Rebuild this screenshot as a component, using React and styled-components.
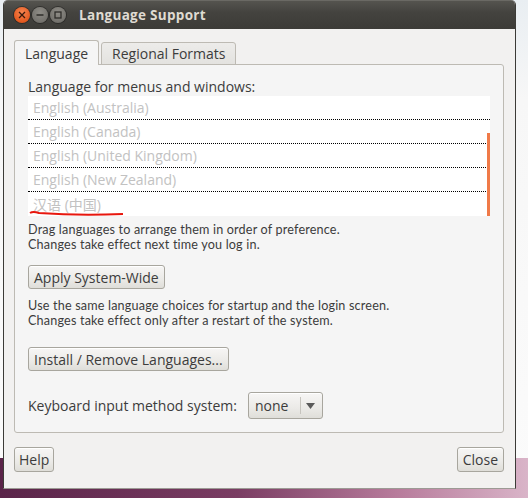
import React from "react";
import styled, { createGlobalStyle } from "styled-components";

const Global = createGlobalStyle`
  html, body {
    margin: 0;
    padding: 0;
  }
  body {
    width: 528px;
    height: 498px;
    overflow: hidden;
    font-family: "Open Sans", "Liberation Sans", sans-serif;
    color: #3c3c3c;
  }
`;

const Desktop = styled.div`
  width: 528px;
  height: 498px;
  display: flex;
  align-items: flex-start;
  background:
    linear-gradient(90deg, #5a2449 0%, #7a3d63 45%, #b77b9b 75%, #d9b4c8 100%) bottom / 100% 40px no-repeat,
    linear-gradient(180deg, #e9eef2 0%, #f7f7f7 20%, #fbfbfb 100%);
`;

const Window = styled.div`
  margin-left: 3px;
  width: 511px;
  height: 488px;
  display: flex;
  flex-direction: column;
  background: #f2f1f0;
  border: 1px solid #3c3b37;
  border-top: none;
  border-bottom-color: #9c9a94;
  border-radius: 5px 5px 0 0;
  overflow: hidden;
`;

const TitleBar = styled.div`
  height: 28px;
  flex: none;
  display: flex;
  align-items: center;
  padding-left: 10px;
  background: linear-gradient(180deg, #55544f 0%, #44433f 40%, #3c3b37 100%);
  border-top: 1px solid #6a6964;
`;

const WinButtons = styled.div`
  display: flex;
  align-items: center;
  gap: 2px;
`;

const WinButton = styled.div`
  width: 16px;
  height: 16px;
  border-radius: 50%;
  display: flex;
  align-items: center;
  justify-content: center;
  background: ${(p) =>
    p.$close
      ? "radial-gradient(circle at 50% 35%, #f68652 0%, #e4591f 70%, #c24613 100%)"
      : "radial-gradient(circle at 50% 35%, #8e8c86 0%, #74726d 70%, #5e5d58 100%)"};
  box-shadow: 0 0 0 1px rgba(30, 30, 28, 0.6);
`;

const Title = styled.div`
  margin-left: 13px;
  font-weight: bold;
  font-size: 13.5px;
  color: #dfdbd2;
  letter-spacing: 0.3px;
`;

const Body = styled.div`
  flex: 1;
  display: flex;
  flex-direction: column;
  padding: 11px 11px 15px 10px;
`;

const Tabs = styled.div`
  display: flex;
  align-items: flex-end;
  gap: 2px;
  height: 25px;
  position: relative;
  z-index: 1;
`;

const Tab = styled.div`
  height: ${(p) => (p.$active ? "25px" : "23px")};
  box-sizing: border-box;
  padding: 0 10px 0 10px;
  display: flex;
  align-items: center;
  font-size: 14px;
  color: #3c3c3c;
  border: 1px solid #bdbab3;
  border-bottom: ${(p) => (p.$active ? "none" : "1px solid #bdbab3")};
  border-radius: 3px 3px 0 0;
  background: ${(p) =>
    p.$active ? "#f5f5f5" : "linear-gradient(180deg, #edecea 0%, #e3e2df 100%)"};
`;

const Panel = styled.div`
  height: 369px;
  box-sizing: border-box;
  margin-top: -1px;
  border: 1px solid #bdbab3;
  border-radius: 0 3px 3px 3px;
  background: #f5f5f5;
  padding: 13px 13px 0 13px;
  display: flex;
  flex-direction: column;
  align-items: flex-start;
`;

const Label = styled.div`
  font-size: 14px;
  line-height: 17px;
`;

const List = styled.div`
  position: relative;
  margin-top: 1px;
  width: 462px;
  background: #fff;
`;

const Row = styled.div`
  height: 24px;
  box-sizing: border-box;
  padding-left: 5px;
  padding-bottom: 1px;
  display: flex;
  align-items: center;
  font-size: 14px;
  color: #c2c2c2;
  font-family: "Open Sans", "Liberation Sans", "Noto Sans CJK SC", sans-serif;
  border-bottom: ${(p) => (p.$last ? "none" : "1px dotted #000")};
`;

const Scroll = styled.div`
  position: absolute;
  right: 0;
  top: 37px;
  bottom: 0;
  width: 3px;
  background: #f07a48;
`;

const Mark = styled.svg`
  position: absolute;
  left: 1px;
  top: 114px;
  overflow: visible;
`;

const Note = styled.div`
  margin-top: ${(p) => p.$mt || 0}px;
  font-family: Lato, "Open Sans", sans-serif;
  font-size: 12.6px;
  line-height: 15px;
  letter-spacing: 0.18px;
`;

const NoteLine = styled.div`
  height: 15px;
  white-space: nowrap;
`;

const Button = styled.div`
  box-sizing: border-box;
  height: ${(p) => p.$h || 24}px;
  margin-top: ${(p) => p.$mt || 0}px;
  padding: 0 ${(p) => p.$px || 5}px;
  display: inline-flex;
  align-items: center;
  font-size: 14px;
  color: #3c3c3c;
  border: 1px solid #a8a69e;
  border-radius: 3px;
  background: linear-gradient(180deg, #f7f6f5 0%, #ebeae7 60%, #dfded9 100%);
  box-shadow: inset 0 1px 0 #fff;
`;

const KeyRow = styled.div`
  margin-top: 21px;
  display: flex;
  align-items: center;
  gap: 11px;
  font-size: 14px;
`;

const Combo = styled(Button)`
  width: 75px;
  padding: 0 0 0 6px;
  justify-content: space-between;
`;

const ComboArrow = styled.div`
  width: 20px;
  height: 17px;
  border-left: 1px solid #c6c4be;
  display: flex;
  align-items: center;
  justify-content: center;
  margin-right: 1px;
`;

const Footer = styled.div`
  margin-top: 14px;
  display: flex;
  justify-content: space-between;
`;

const languages = [
  "English (Australia)",
  "English (Canada)",
  "English (United Kingdom)",
  "English (New Zealand)",
  "汉语 (中国)",
];

export default function App() {
  return (
    <>
      <Global />
      <Desktop>
        <Window>
          <TitleBar>
            <WinButtons>
              <WinButton $close>
                <svg width="8" height="8" viewBox="0 0 8 8">
                  <path d="M1 1L7 7M7 1L1 7" stroke="#3a1a0c" strokeWidth="1.3" />
                </svg>
              </WinButton>
              <WinButton>
                <svg width="8" height="8" viewBox="0 0 8 8">
                  <path d="M0.5 4H7.5" stroke="#2e2d2a" strokeWidth="1.6" />
                </svg>
              </WinButton>
              <WinButton>
                <svg width="8" height="8" viewBox="0 0 8 8">
                  <rect x="1" y="1" width="6" height="6" fill="none" stroke="#2e2d2a" strokeWidth="1.3" />
                </svg>
              </WinButton>
            </WinButtons>
            <Title>Language Support</Title>
          </TitleBar>
          <Body>
            <Tabs>
              <Tab $active>Language</Tab>
              <Tab>Regional Formats</Tab>
            </Tabs>
            <Panel>
              <Label>Language for menus and windows:</Label>
              <List>
                {languages.map((l, i) => (
                  <Row key={l} $last={i === languages.length - 1}>
                    {l}
                  </Row>
                ))}
                <Scroll />
                <Mark width="96" height="8">
                  <path d="M1 3 Q4 1 10 3 Q50 6 94 4" fill="none" stroke="#e8170e" strokeWidth="2" />
                </Mark>
              </List>
              <Note $mt={6}>
                <NoteLine>Drag languages to arrange them in order of preference.</NoteLine>
                <NoteLine>Changes take effect next time you log in.</NoteLine>
              </Note>
              <Button $mt={13} $h={24}>Apply System-Wide</Button>
              <Note $mt={9}>
                <NoteLine>Use the same language choices for startup and the login screen.</NoteLine>
                <NoteLine>Changes take effect only after a restart of the system.</NoteLine>
              </Note>
              <Button $mt={19} $h={24}>Install / Remove Languages...</Button>
              <KeyRow>
                <span>Keyboard input method system:</span>
                <Combo $h={27}>
                  <span>none</span>
                  <ComboArrow>
                    <svg width="9" height="6" viewBox="0 0 9 6">
                      <path d="M0 0H9L4.5 6Z" fill="#5a5a5a" />
                    </svg>
                  </ComboArrow>
                </Combo>
              </KeyRow>
            </Panel>
            <Footer>
              <Button $h={25} $px={4}>Help</Button>
              <Button $h={25} $px={5}>Close</Button>
            </Footer>
          </Body>
        </Window>
      </Desktop>
    </>
  );
}
